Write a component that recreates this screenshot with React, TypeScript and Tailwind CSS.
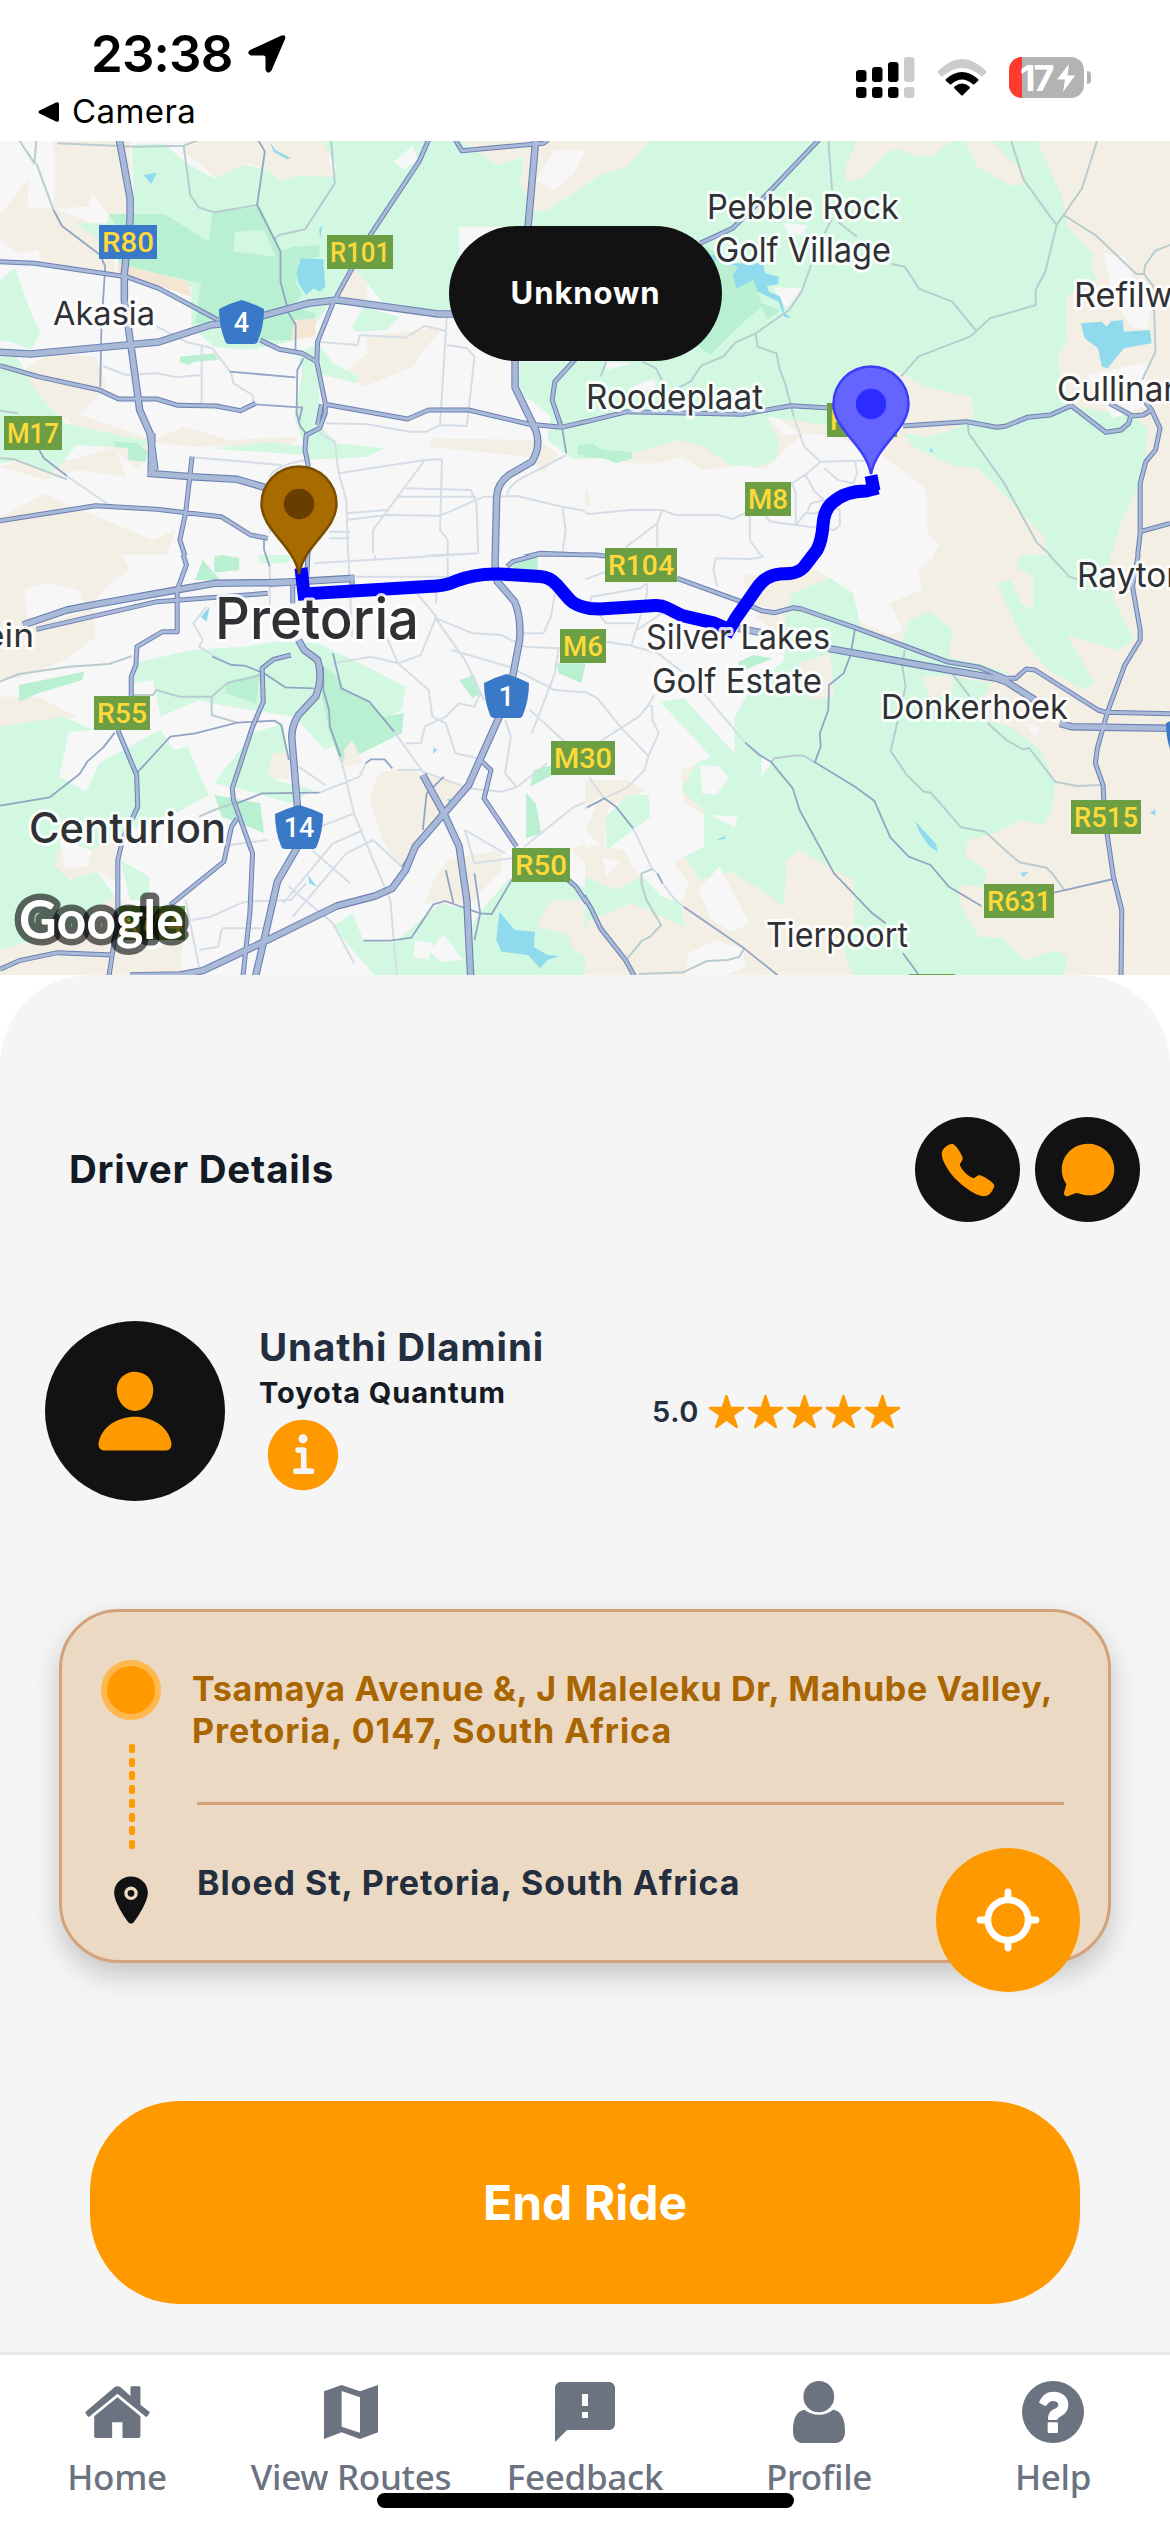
import React from "react";
import {
  IoCall,
  IoChatbubble,
  IoInformationCircle,
  IoLocation,
  IoPerson,
  IoStar,
} from "react-icons/io5";
import { MdFeedback } from "react-icons/md";

const CITY = "#f7f7f7";
const SAND = "#f4efe4";
const PARK = "#d2f8e1";
const FOREST = "#b9f0d2";
const WATER = "#90daee";

type Area = [fill: string, points: string];

interface Sheet {
  id: string;
  x: number;
  y: number;
  clip: [number, number, number, number];
  base: string;
  areas: Area[];
  minor: string;
  rural: string;
  local: string;
  primary: string;
  motorway: string;
}

/* The map is drawn as four sheets, each in its own finer grid. */
const sheets: Sheet[] = [
  {
    id: "nw",
    x: 0,
    y: 140,
    clip: [0, 140, 585, 415],
    base: CITY,
    areas: [
      [SAND, "140,0 340,0 345,180 340,250 280,220 240,160 230,200 140,205 145,100"],
      [SAND, "0,225 75,115 72,205 140,205 220,240 300,300 300,400 200,400 110,370 100,330 50,340 0,300"],
      [SAND, "480,0 850,0 870,112 780,105 735,125 700,90 650,70 565,115 520,70 480,40"],
      [SAND, "1200,0 1568,0 1568,110 1430,210 1395,215 1360,130 1370,50 1300,75"],
      [SAND, "50,700 130,640 250,650 280,740 200,830 120,850 60,760"],
      [SAND, "150,800 400,900 480,860 600,900 780,890 760,915 500,920 400,905 360,990 300,930 200,870"],
      [SAND, "0,1130 120,1060 150,1080 400,1200 460,1170 430,1260 0,1260"],
      [SAND, "1130,895 1400,900 1460,940 1420,1000 1380,950 1120,920"],
      [SAND, "960,590 1160,560 1100,640 1080,680 950,740 900,700 960,640"],
      [SAND, "0,980 60,960 190,960 300,920 330,1010 200,990 120,1020"],
      [PARK, "345,15 430,10 480,65 560,115 640,75 700,90 735,125 780,105 870,112 880,80 840,0 1200,0 1300,75 1370,50 1360,130 1395,215 1430,210 1568,110 1568,260 1200,260 1200,520 1000,490 960,430 920,385 870,480 820,560 800,590 740,610 650,630 560,620 500,560 500,440 340,400 300,350 260,300 195,250 280,250 285,220 350,220"],
      [FOREST, "285,222 430,222 545,305 555,215 680,200 735,330 770,320 835,315 835,350 780,360 775,430 790,465 760,500 825,520 820,545 760,600 690,600 640,560 570,550 510,550 525,430 410,400 310,370 300,250"],
      [PARK, "615,275 690,270 720,350 610,335"],
      ["#f4e6d3", "305,370 490,425 500,470 410,435 310,400"],
      ["#f4e6d3", "770,540 825,535 825,590 760,600"],
      [SAND, "900,400 930,390 960,430 960,500 880,480"],
      [CITY, "1450,30 1530,30 1500,100 1450,150 1400,120"],
      [CITY, "1080,15 1090,60 1055,90 1030,65"],
      [PARK, "0,420 40,385 75,500 105,580 80,630 40,610 0,600"],
      [PARK, "0,640 40,640 90,750 170,850 330,890 400,905 360,925 200,915 150,985 130,1000 60,960 0,970"],
      [FOREST, "300,905 360,910 385,935 380,965 335,960 335,925 300,920"],
      [PARK, "780,640 830,610 870,670 940,710 930,730 830,700 840,860 880,910 1005,925 960,950 800,960 790,900 770,830 790,700"],
      [PARK, "560,925 700,905 800,920 800,945 600,930"],
      [PARK, "1360,665 1568,665 1568,950 1500,960 1430,900 1440,830 1400,790 1350,760"],
      [FOREST, "1510,915 1568,910 1568,950 1510,945"],
      [FOREST, "470,650 560,640 570,660 510,665 490,675 470,665"],
      [PARK, "950,500 1045,530 1010,570 930,575 920,560"],
      [WATER, "785,355 845,358 850,440 835,455 820,445 800,465 780,430 775,400"],
      [WATER, "375,105 410,98 395,133"],
      [WATER, "705,5 720,30 760,55 750,58 715,35"],
      [WATER, "843,255 837,295 834,270"],
    ],
    motorway:
      "M312 0L340 175V240L325 400V480L345 640L365 810L392 880L405 990M395 1000L397 880M385 1000L500 1010 620 1018 700 1045M0 637L80 642L415 606L550 555L630 545L805 490L880 480L1145 522H1200M1400 0L1380 260M1346 660V742L1400 870Q1415 920 1390 965L1330 1005Q1300 1030 1298 1070L1294 1260",
    primary:
      "M0 365L90 370 330 410 415 445 570 540M680 600L730 628 790 640 828 665 850 790V820L835 865 800 885 797 930 805 975 805 1260M1120 0L1095 65 965 290 870 490 830 605 828 665M1190 0L1207 32 1420 10 1432 0M0 677L100 710 260 750 310 777 410 777 465 796 565 798 628 812 668 790M850 793L1065 837 1120 810 1225 810 1380 852 1467 862 1568 835M1467 862L1443 780 1450 725 1510 650M0 1142L250 1097 410 1108 578 1130 655 1185 700 1195M502 950L485 1120 470 1200 487 1260M840 793L830 855M1340 1260L1410 1240 1568 1247",
    local:
      "M675 0L692 35 672 195 733 335 733 425 755 520 773 555 772 640M793 655L777 690 775 820 785 860 800 880M140 210L162 258 262 345 275 380 265 560 262 740M600 695L772 712M668 793L790 803 780 850M100 925L115 955 175 1008M1470 870L1480 940M690 1200V1230L700 1260",
    rural:
      "M50 0L90 70 95 0M95 70L140 210M150 10L355 20 480 17 520 0M480 17L497 165 520 203 560 217 672 195M865 0L875 130 797 268 730 285 715 298M0 955L35 957 175 1018M0 812L48 820",
    minor:
      "M175 1008L285 1095M410 560L485 605 555 625 605 700 610 730 660 765 663 790M527 615V790M268 678L330 705 410 700 460 712 525 705M830 605L935 615 940 585 1060 593 1110 558 1165 573M1168 520L1150 855M1168 615L1220 625 1240 650 1220 858 1150 855 1115 875 1070 875 960 853 850 850M835 880L875 905 885 1000 905 1080 910 1260M885 1000L1110 960 1155 958 1150 1170 1170 1200 1170 1260M1110 960L975 1170V1240M1060 1045L1230 1050 1245 1090 1250 1240M1040 1070H1245M905 1120L1010 1110M905 1140L1010 1125 1150 1127 1265 1070 1350 1068 1470 1100 1568 1120M1470 1100L1478 1170 1470 1240M1325 1065Q1330 1030 1380 1005L1480 945M860 1175H915M860 1195H915M505 952L735 975M705 1180V1010Q720 975 800 960M890 1258L1250 1240",
  },
  {
    id: "ne",
    x: 570,
    y: 140,
    clip: [585, 140, 585, 415],
    base: PARK,
    areas: [
      [SAND, "0,0 210,0 150,80 80,105 0,165"],
      [CITY, "0,0 30,0 15,30 45,60 0,90"],
      [SAND, "745,0 745,15 720,80 720,120 740,125 770,110 830,35 860,28 910,50 950,48 1000,0"],
      [SAND, "1030,0 1100,0 1150,60 1190,90 1185,130 1155,138 1065,80"],
      [SAND, "1220,0 1568,0 1568,1260 1410,1260 1440,1150 1500,1000 1510,870 1480,830 1320,800 1285,740 1275,650 1300,600 1295,470 1380,420 1365,390 1365,340 1300,260 1285,170"],
      [CITY, "1395,340 1450,350 1475,420 1520,480 1510,570 1465,560 1420,470"],
      [CITY, "1350,705 1510,665 1500,800 1420,835 1400,800"],
      [SAND, "850,690 930,740 1050,770 1055,830 1000,870 930,890 870,880 900,925 1000,975 1065,985 1130,1060 1240,1190 1250,1260 0,1260 0,960 180,935 285,900 350,920 430,985 480,985 540,960 545,900 515,830 700,860"],
      [CITY, "0,960 100,955 160,970 230,970 290,950 345,990 450,975 510,990 560,930 610,880 700,890 820,950 930,1045 935,1180 965,1215 940,1260 0,1260"],
      [SAND, "0,1030 45,1050 55,1098 0,1090"],
      [CITY, "515,830 545,835 600,880 560,885"],
      [CITY, "90,665 165,670 95,690"],
      [CITY, "150,745 220,715 225,740 180,760"],
      [CITY, "530,442 608,445 565,505"],
      [CITY, "555,250 620,255 610,285 570,280"],
      [CITY, "0,870 30,865 0,905"],
      [FOREST, "340,310 440,380 480,420 500,490 550,510 515,540 500,500 460,540 365,645 320,600 370,540 380,440"],
      [FOREST, "20,915 60,910 85,930 160,935 165,955 120,970 90,955 15,950"],
      [WATER, "370,345 395,345 410,370 505,370 510,400 545,410 545,432 515,438 520,455 550,470 560,515 578,535 560,530 545,485 490,455 480,420 435,445 425,405 440,380 375,360"],
      [WATER, "1335,550 1390,545 1402,560 1415,543 1445,541 1447,575 1515,570 1520,610 1447,625 1405,685 1390,680 1380,625 1345,595"],
      [WATER, "938,932 945,923 950,938"],
    ],
    motorway: "",
    primary:
      "M650 0L500 180 425 265 340 310M0 857L150 815L450 823L578 797L690 805M870 858L1035 845 1115 862 1140 858 1195 832 1255 825 1310 797 1400 877 1440 870 1460 850 1465 828 1498 825 1520 810M1410 790L1470 828M1500 780L1520 810 1542 865 1530 930 1505 965 1490 1030V1180L1482 1260M1490 1175L1568 1150M0 1243L70 1245 100 1250M0 680L15 662",
    local: "",
    rural:
      "M675 0L685 150M685 235L665 280M635 360L605 455 573 510 485 580 433 607 400 650 343 677 315 725 280 745M700 245L750 290M840 372L875 380 913 447 998 484 1062 573L1045 590 910 650 865 710M1062 573L1098 535 1217 495 1217 450 1242 395 1272 255M1152 0L1185 118 1255 230 1272 255M1378 0L1338 145 1290 225 1272 255M1290 225L1375 287 1480 402 1500 402 1503 375 1530 332 1568 315M1500 402L1525 440 1530 635 1495 720M485 580L490 620 540 640 547 685 562 730 585 830M190 665L225 685 240 720M95 665L80 710M35 780L20 840M1040 850L1042 880 1135 1030 1220 1208 1270 1260",
    minor:
      "M585 830L612 920 655 965 620 1000 580 1030 590 1060V1155M655 965L745 962 750 1000 740 1030 700 1020 665 985M745 962H780M615 1005L640 1055 665 1080 630 1090 620 1115M590 1155L615 1120 645 1120 675 1090 705 1110V1155L690 1170 525 1145 510 1130M0 1107L50 1122 155 1110 240 1110 275 1125 385 1125 425 1137 455 1120 470 1130V1200L505 1255M240 1110L228 1150 145 1222M228 1150V1222",
  },
  {
    id: "sw",
    x: 0,
    y: 550,
    clip: [0, 555, 585, 420],
    base: CITY,
    areas: [
      [SAND, "0,0 260,0 320,20 340,60 290,95 240,160 250,260 170,330 60,380 0,390"],
      [CITY, "65,120 120,100 205,120 225,180 150,210 70,200"],
      [SAND, "0,440 100,440 200,500 0,540"],
      [PARK, "0,530 165,500 245,540 180,545 155,680 225,725 260,640 320,600 420,540 455,600 490,590 545,735 460,790 320,850 240,900 150,900 180,990 255,965 300,1040 250,1120 150,1150 0,1200"],
      [SAND, "150,900 240,900 300,860 310,1000 255,965 180,990 145,950"],
      [CITY, "155,870 240,900 230,950 170,955"],
      [PARK, "350,340 500,300 640,290 720,275 830,280 960,350 1060,410 1050,480 850,600 770,500 600,470 520,450 420,500 400,390 350,400"],
      [PARK, "560,700 660,550 740,520 750,600 720,690 820,720 760,760 640,720"],
      [SAND, "710,610 755,610 755,690 700,680"],
      [FOREST, "850,350 890,390 900,420 965,455 1000,500 1055,490 1050,550 890,640 860,540 840,430"],
      [FOREST, "590,395 680,370 670,460 590,430"],
      [FOREST, "560,20 580,15 625,25 625,60 560,68"],
      [FOREST, "530,30 575,90 510,90"],
      [FOREST, "50,405 220,365 215,390 100,430 50,455"],
      [FOREST, "1200,390 1240,375 1255,430 1235,445"],
      [FOREST, "1455,340 1530,340 1520,400 1460,370"],
      [FOREST, "1395,660 1460,640 1470,660 1385,710"],
      [FOREST, "1375,730 1400,760 1415,850 1375,865"],
      [FOREST, "1340,45 1405,20 1405,65 1340,70"],
      [PARK, "670,0 780,0 750,40 680,40"],
      [FOREST, "560,735 680,760 690,850 650,830 580,800"],
      [PARK, "315,930 390,980 390,1050 340,1050"],
      [SAND, "990,670 1060,650 1110,680 1150,680 1220,710 1100,850 1050,960 1000,870 965,745"],
      [SAND, "1170,930 1310,900 1310,960 1230,1060 1110,1060 1130,1000"],
      [SAND, "0,1200 150,1150 250,1120 240,1080 300,1040 330,1060 290,1200 400,1200 480,1160 470,1278 0,1278"],
      [SAND, "900,600 920,570 950,640 900,650"],
      [SAND, "1490,900 1568,860 1568,980"],
      [PARK, "1245,1100 1330,985 1490,990 1568,1040 1568,1278 1180,1278"],
      [PARK, "870,1130 920,1090 950,1170 1030,1180 1150,1060 1230,1080 1240,1278 980,1278"],
      [CITY, "1085,1170 1130,1180 1120,1230 1080,1220"],
      [CITY, "1160,1155 1210,1230 1150,1235 1120,1200"],
      [SAND, "1440,1050 1530,1050 1568,1090 1568,1240 1500,1200 1480,1150 1400,1130"],
      [WATER, "1305,1085 1345,1140 1398,1145 1395,1190 1430,1215 1462,1218 1430,1230 1412,1255 1380,1215 1310,1205 1297,1170"],
      [WATER, "805,975 828,1010 808,1000"],
      [WATER, "525,200 548,170 540,215"],
      [WATER, "1133,592 1143,600 1132,612"],
      [WATER, "1168,748 1178,745 1174,760"],
    ],
    motorway:
      "M60 225L175 180 250 163 460 120 560 100 700 98 770 95M705 100L925 85M780 270L795 300 830 330Q845 380 825 440L780 495Q760 530 763 570L778 780M778 890L725 995 690 1170 668 1278M1294 0V60L1300 95 1345 155Q1362 200 1358 270L1338 390M1305 500L1250 640 1225 705 1085 890 1060 960 1025 1015 980 1038 880 1068 685 1178 530 1262 470 1275 340 1278M1105 675L1160 790 1200 890 1220 1050 1230 1278",
    primary:
      "M95 238L410 155 700 130M475 0L487 45 463 120V245L425 245 358 290 355 345 343 380V440M308 540L357 675 360 770 320 870 308 930V1100L285 1278M0 1258L50 1232 150 1208 295 1215M760 315L715 328 685 355 688 455 660 530 607 715 610 750 660 910 653 1090 635 1278M620 805L605 830 585 935 445 1065M1255 630L1283 660 1265 745 1350 890M1485 990L1505 1010 1540 1070 1568 1130M805 0L800 130M1325 50L1340 35 1410 12 1568 15M765 105V160M920 75V110",
    local:
      "M0 767L130 742 208 672 228 635 270 592 300 548M357 670L445 560 510 550 620 518 718 512 735 525 755 630M555 320L605 345 640 347 690 370 745 412 820 415M845 350L845 420 860 480 862 530 890 620M870 310L892 415 965 455 1030 545M620 760L685 730 835 728M955 640L970 628 1005 628 1025 655M690 0L705 50M1160 680L1115 730 1105 840M1085 890L1050 950M1165 960L1185 1060M1240 970L1255 1090 1240 1170M1255 1090L1285 1092 1340 985M1255 1090L1163 1053 1133 1063 1075 1163 1020 1172 950 1172",
    rural: "M0 395L50 372 180 350 285 342 345 318M343 435L400 435 408 420 470 440 553 440V495L620 518M553 440L595 398 660 382 690 370M520 800L560 780 610 760",
    minor:
      "M530 270L520 290 600 345M540 170L505 220 530 270M705 50V170M835 728L940 680 955 640M890 620L925 790 975 930 1020 1050 1037 1278M1030 545L1105 665 1225 715 1310 725 1350 712 1430 640M780 650L850 705M1040 660H1100M815 900L915 1000M755 1010L870 1120 925 1240M740 1060L870 880 950 840M765 1100L905 910 975 870 1050 950M815 840L925 790M640 1055L760 1050 800 1000M500 1110L550 1100 640 1055M485 1050L520 1250M580 1135L700 1135M1010 260L1040 340 1120 420 1130 500 1165 520 1190 610 1250 625M870 340L970 320 1040 340 1100 315 1140 200 1090 130M1135 200L1215 330 1265 450M1140 205L1235 250 1310 255 1370 290 1460 295 1450 370 1390 550M1180 300L1330 350 1450 420 1568 430M1060 580L1100 580 1110 530 1165 500 1200 460 1240 470 1255 430M1385 480L1480 580M1320 510L1335 560 1320 670 1350 712M1215 840L1240 940 1370 920M1215 840L1320 910M1370 890L1500 770 1568 740M910 0L920 260M980 0V30M820 40L1255 10V-10M930 80H1250M1170 0V100M1140 105V160M1450 130L1440 200 1420 250 1360 250M600 885L700 870M520 1200L570 1190 580 1135",
  },
  {
    id: "se",
    x: 570,
    y: 550,
    clip: [585, 555, 585, 420],
    base: SAND,
    areas: [
      [CITY, "0,0 960,10 910,60 920,120 835,160 870,240 840,255 700,190 540,170 480,200 560,260 570,320 540,400 440,500 430,610 390,570 350,540 340,590 380,630 290,660 300,760 360,800 350,890 300,920 200,980 150,900 90,890 100,770 200,720 150,690 0,690"],
      [SAND, "450,75 560,80 640,60 690,90 600,130 560,190 480,160"],
      [PARK, "235,455 300,445 350,510 430,610 430,500 470,420 560,330 565,180 580,130 680,85 740,130 760,230 860,290 890,210 940,185 1000,240 990,320 1080,345 1150,370 1000,380 1100,400 1050,500 1150,530 1230,600 1268,700 1260,780 1235,825 1180,810 1110,850 1040,870 1030,920 1090,960 1080,1010 1015,1005 1020,1070 1070,1160 1130,1165 1190,1230 1270,1200 1300,1220 1290,1278 740,1278 715,1200 745,1100 740,990 690,960 600,900 565,930 560,1070 500,1020 420,965 340,990 300,920 350,890 350,780 290,720 330,640 370,620"],
      [PARK, "1115,100 1150,90 1180,160 1210,180 1210,80 1165,50 1180,10 1410,0 1420,150 1475,270 1430,300 1300,255 1370,400 1345,420 1250,360 1190,280"],
      [PARK, "95,800 150,735 205,735 210,800 95,900"],
      [PARK, "0,940 40,980 120,1020 220,960 290,1060 300,1130 160,1060 50,1110 20,1190 0,1150"],
      [SAND, "600,340 680,310 690,440 630,450"],
      [SAND, "920,380 1000,375 1000,430 940,445"],
      [CITY, "340,645 390,650 415,685 380,735 345,730"],
      [CITY, "335,1020 390,950 470,1120 420,1145 370,1110"],
      [CITY, "310,1210 380,1170 450,1195 460,1250 400,1278 300,1278"],
      [CITY, "500,620 530,630 500,685"],
      [CITY, "130,870 200,830 310,1000 290,1060 240,1040 160,945"],
      [CITY, "365,795 440,800 430,830"],
      [CITY, "0,800 80,740 40,840 78,885 0,905"],
      [CITY, "85,920 130,935 95,980"],
      [CITY, "1190,520 1230,530 1215,565"],
      [CITY, "580,440 540,430 560,400"],
      [FOREST, "440,335 480,315 530,325 445,365"],
      [FOREST, "0,340 40,340 25,405 0,380"],
      [WATER, "900,810 915,830 955,880 962,905 940,890 915,850"],
      [WATER, "378,872 405,858 405,866"],
      [WATER, "1178,968 1200,965 1183,981"],
      [WATER, "1515,788 1530,778 1530,797"],
    ],
    motorway: "M440 235L500 248M675 295L900 342 1115 385 1140 395 1215 450M1280 520L1310 530 1568 535",
    primary:
      "M0 13L70 15 110 20M280 85L440 152 500 182 535 188 585 173 605 177 745 233 985 335 1070 352 1140 385 1165 385 1192 357 1215 360 1380 480 1400 487 1568 491M1487 0L1470 110 1490 240V270L1450 345 1405 485 1378 595 1373 640 1393 705 1397 800 1420 980 1442 1080 1440 1278M0 990L20 1010 55 1075 80 1135 145 1230 168 1278",
    local:
      "M745 235L733 315 715 370 677 405 675 480 653 550 655 590 640 637 745 710 795 752 837 862 885 920 942 945 990 1010 1075 1068M1265 1028L1420 987M458 578L495 615 525 635 582 715 600 780 690 970 790 1090 825 1120M870 1210L910 1272M45 772L90 745 120 770 165 835M228 970L242 1000M297 1070L455 1195 545 1278",
    rural:
      "M525 635L535 625 590 616 612 618 640 637M875 300L868 345 877 410 838 603 880 675 925 725 943 728 1022 832 1085 845 1145 908 1175 937 1245 953 1260 970 1292 1020M1000 372L1045 440M1092 520L1140 570 1183 598 1200 594 1268 695 1325 708 1390 705M215 957L187 970 187 1000 200 1050 238 1125 210 1160 188 1172 150 1225M180 1272L295 1267 358 1233 412 1230 443 1220 455 1195M1240 0L1305 80 1330 90",
    minor:
      "M350 430L458 578M165 835L215 957 228 970M242 1000L275 1050 297 1070M0 795L45 772M80 573L180 500 205 465 215 470 215 510 232 550 205 618 195 660 150 712 90 745 60 700 50 680M205 465L220 435M0 423L35 423 70 443 135 535 205 618M95 275L160 287 230 310 350 415M160 287L200 140 202 100M0 105L95 65M55 140L185 115 200 100M55 140V165L95 220H170M385 110L375 60 380 25 470 27 505 20 490 0M175 240L240 190",
  },
];

type Plate = [text: string, x: number, y: number, w: number, blue?: boolean];
const plates: Plate[] = [
  ["R80", 99, 225, 58, true],
  ["R101", 327, 235, 66],
  ["M17", 4, 416, 58],
  ["M8", 745, 482, 46],
  ["R104", 605, 548, 72],
  ["R513", 827, 403, 70],
  ["R55", 94, 696, 56],
  ["M6", 560, 629, 46],
  ["M30", 551, 741, 64],
  ["R50", 512, 848, 58],
  ["R515", 1071, 800, 70],
  ["R631", 984, 884, 70],
  ["R114", 119, 906, 66],
  ["", 909, 974, 46],
];

type Shield = [text: string, cx: number, top: number, w: number];
const shields: Shield[] = [
  ["4", 241.5, 300, 45],
  ["1", 506.5, 674, 45],
  ["14", 299, 805, 48],
  ["4", 1190, 714, 48],
];

type Label = [text: string, x: number, baseline: number, width: number, size: number, weight: number];
const labels: Label[] = [
  ["Akasia", 53, 325, 102, 33, 400],
  ["Pebble Rock", 707, 219, 192, 34, 400],
  ["Golf Village", 715, 262, 176, 34, 400],
  ["Roodeplaat", 586, 409, 177, 34, 400],
  ["Refilwe", 1074, 307, 118, 34, 400],
  ["Cullinan", 1057, 401, 126, 34, 400],
  ["Pretoria", 215, 639, 204, 57, 500],
  ["Centurion", 29, 843, 197, 42, 500],
  ["ein", -16, 647, 50, 33, 400],
  ["Silver Lakes", 646, 649, 184, 34, 400],
  ["Golf Estate", 652, 693, 170, 34, 400],
  ["Rayton", 1077, 587, 109, 34, 400],
  ["Donkerhoek", 881, 719, 187, 34, 400],
  ["Tierpoort", 766, 947, 142, 34, 400],
];

function Road({ d, color, width }: { d: string; color: string; width: number }) {
  return (
    <path
      d={d}
      fill="none"
      stroke={color}
      strokeWidth={width}
      strokeLinejoin="round"
      vectorEffect="non-scaling-stroke"
    />
  );
}

function MapPin({ x, y, fill, edge, dot }: { x: number; y: number; fill: string; edge: string; dot: string }) {
  return (
    <g transform={`translate(${x} ${y})`}>
      <path
        d="M0 70C-5 41-37.500 26-37.500 0A37.500 37.500 0 1 1 37.500 0C37.500 26 5 41 0 70Z"
        fill={fill}
        stroke={edge}
        strokeWidth="2.500"
      />
      <circle r="15.200" fill={dot} />
    </g>
  );
}

function CityMap() {
  return (
    <svg className="block h-[834px] w-full" viewBox="0 141 1170 834">
      <defs>
        {sheets.map((s) => (
          <clipPath key={s.id} id={`sheet-${s.id}`}>
            <rect x={s.clip[0]} y={s.clip[1]} width={s.clip[2]} height={s.clip[3]} />
          </clipPath>
        ))}
      </defs>
      {sheets.map((s) => (
        <g key={s.id} clipPath={`url(#sheet-${s.id})`}>
          <g transform={`translate(${s.x} ${s.y}) scale(0.382653 0.333333)`}>
            <rect x="0" y="0" width="1568" height="1290" fill={s.base} />
            {s.areas.map(([fill, points], i) => (
              <polygon key={i} points={points} fill={fill} />
            ))}
            <Road d={s.minor} color="#d5dee6" width={2} />
            <Road d={s.rural} color="#b9ccd0" width={2} />
            <Road d={s.local} color="#92a5c4" width={1.8} />
            <Road d={s.primary} color="#6d80b3" width={5} />
            <Road d={s.motorway} color="#6d80b3" width={7.5} />
            <Road d={s.primary} color="#a9b9d8" width={3} />
            <Road d={s.motorway} color="#a9b9d8" width={5.3} />
          </g>
        </g>
      ))}

      {plates.map(([text, x, y, w, blue]) => (
        <g key={`${text}${x}`}>
          <rect x={x} y={y} width={w} height="34" fill={blue ? "#3a78c8" : "#6c9f44"} />
          {text && (
            <text
              x={x + 3}
              y={y + 27}
              textLength={w - 6}
              lengthAdjust="spacingAndGlyphs"
              fill="#fdd93a"
              fontSize="28"
              className="font-['Roboto',sans-serif] font-medium"
            >
              {text}
            </text>
          )}
        </g>
      ))}

      {shields.map(([text, cx, top, w]) => (
        <g key={`${text}${cx}`} transform={`translate(${cx} ${top})`}>
          <path
            d={`M0 0Q11 3 ${w / 2} 9Q${w / 2} 26 ${w / 2 - 6} 41Q${w / 2 - 7} 44 ${w / 2 - 10} 44H${-w / 2 + 10}Q${-w / 2 + 7} 44 ${-w / 2 + 6} 41Q${-w / 2} 26 ${-w / 2} 9Q-11 3 0 0Z`}
            fill="#3a78c8"
          />
          <text
            x="0"
            y="31.500"
            textAnchor="middle"
            fill="#fff"
            fontSize="27"
            className="font-['Roboto',sans-serif] font-medium"
          >
            {text}
          </text>
        </g>
      ))}

      <g fill="none" stroke="#0000ff" strokeWidth="13">
        <path d="M301 568L304 594L436 586Q448 585 456 581Q476 573 500 574L540 576.500Q550 577 557 585L570 600Q576 606 590 608.500L600 609L655 605.500Q661 605 667 608L682 615.500L714 623Q722 626 729 630L736 618L757 588Q766 575 780 574L790 573.500Q798 573 804 567L817 550Q822 540 823 525Q824 510 832 503Q845 491 866 491L878 488" />
        <path d="M874 491L871 475.500" />
      </g>

      {labels.map(([text, x, y, w, size, weight]) => (
        <text
          key={text}
          x={x}
          y={y}
          textLength={w}
          lengthAdjust="spacingAndGlyphs"
          fontSize={size}
          fontWeight={weight}
          fill="#303135"
          stroke="#ffffff"
          strokeOpacity="0.85"
          strokeWidth="6"
          strokeLinejoin="round"
          paintOrder="stroke"
          className="font-['Inter',sans-serif]"
        >
          {text}
        </text>
      ))}

      <MapPin x={299} y={504} fill="#a86b00" edge="#7a4d00" dot="#663f00" />
      <MapPin x={871} y={404} fill="#6464ff" edge="#3c3cff" dot="#2d2dff" />

      <text
        x="19"
        y="939"
        textLength="165"
        lengthAdjust="spacingAndGlyphs"
        fontSize="53"
        fill="#ffffff"
        stroke="#000000"
        strokeOpacity="0.6"
        strokeWidth="13"
        strokeLinejoin="round"
        paintOrder="stroke"
        className="font-['Lato',sans-serif] font-bold"
      >
        Google
      </text>
    </svg>
  );
}

function StatusBar() {
  return (
    <header className="flex h-[141px] justify-between bg-white">
      <div className="flex flex-col pt-[28px] text-black">
        <div className="flex h-[51px] items-start pl-[91px]">
          <span className="w-[157px] text-[51px] leading-none font-semibold tracking-[-0.8px]">23:38</span>
          <svg className="mt-[7px] h-[38px] w-[38px]" viewBox="0 0 38 38">
            <path
              d="M33.500.500Q38.500-1 37 4L23.500 35.500Q20 40 17.500 35V22.500Q17.500 20.500 15.500 20.500H3Q-2 18.500 2 15Z"
              fill="currentColor"
            />
          </svg>
        </div>
        <div className="mt-[16px] flex items-start pl-[38px]">
          <svg className="mt-[7px] h-[20px] w-[21px]" viewBox="0 0 21 20">
            <path d="M1.500 8.500Q-.500 10 1.500 11.500L18 19.500Q21 20.500 21 18V2Q21-.500 18 .500Z" fill="currentColor" />
          </svg>
          <span className="ml-[13px] text-[33px] leading-none tracking-[0.4px]">Camera</span>
        </div>
      </div>
      <div className="flex items-start pt-[57px] pr-[79px]">
        <svg className="h-[41px] w-[59px]" viewBox="0 0 59 41">
          <g fill="#000">
            <rect x="0" y="13" width="10.500" height="12" rx="3" />
            <rect x="16" y="10" width="10.500" height="15" rx="3" />
            <rect x="32" y="5" width="10.500" height="20" rx="3" />
            <rect x="0" y="30" width="10.500" height="11" rx="3" />
            <rect x="16" y="30" width="10.500" height="11" rx="3" />
            <rect x="32" y="30" width="10.500" height="11" rx="3" />
          </g>
          <g fill="#ccc">
            <rect x="48" y="0" width="10.500" height="25" rx="3" />
            <rect x="48" y="30" width="10.500" height="11" rx="3" />
          </g>
        </svg>
        <svg className="mt-[2px] ml-[22px] h-[37px] w-[50px]" viewBox="0 0 50 37">
          <path d="M1 12Q25-12 49 12Q50 13 49 14L46 17Q45 18 44 17Q25 1 6 17Q5 18 4 17L1 14Q0 13 1 12Z" fill="#ccc" />
          <path d="M9 20Q25 6 41 20Q42 21 41 22L37.500 25Q36.500 26 35.500 25Q25 16 14.500 25Q13.500 26 12.500 25L9 22Q8 21 9 20Z" fill="#000" />
          <path d="M17.500 27.500Q25 21.500 32.500 27.500Q33.500 28.500 32.500 29.500L26 36Q25 37 24 36L17.500 29.500Q16.500 28.500 17.500 27.500Z" fill="#000" />
        </svg>
        <div className="ml-[22px] flex items-center">
          <div className="relative flex h-[41px] w-[75px] items-center overflow-hidden rounded-[13px] bg-[#b3b3b3] text-white">
            <div className="absolute inset-y-0 left-0 w-[13px] bg-[#ff3b30]" />
            <span className="relative ml-[11px] w-[37px] text-[36px] leading-none font-bold tracking-[-2px]">17</span>
            <svg className="relative h-[28px] w-[18px]" viewBox="0 0 18 28">
              <path d="M12 0L0 15.500H8L6 28L18 11.500H10.500Z" fill="#fff" />
            </svg>
          </div>
          <div className="ml-[3px] h-[13px] w-[4px] rounded-r-full bg-[#b3b3b3]" />
        </div>
      </div>
    </header>
  );
}

function RoundAction({ children }: { children: React.ReactNode }) {
  return (
    <button className="flex size-[105px] items-center justify-center rounded-full bg-[#121212] text-[60px] text-[#ff9900]">
      {children}
    </button>
  );
}

function TripCard() {
  return (
    <section className="relative mx-[59px] mt-[108px] flex h-[354px] rounded-[60px] border-[3px] border-[#d4a27a] bg-[#ecd9c4] shadow-[0_12px_28px_rgba(0,0,0,0.2)]">
      <div className="ml-[39px] flex w-[60px] flex-col items-center pt-[48px]">
        <div className="size-[60px] rounded-full border-[6px] border-[#ffb84d] bg-[#ff9900]" />
        <div className="mt-[24px] ml-[1px] flex h-[105px] flex-col justify-between">
          {Array.from({ length: 8 }, (_, i) => (
            <div key={i} className="h-[9px] w-[6px] rounded-[2px] bg-[#ff9900]" />
          ))}
        </div>
        <IoLocation className="mt-[24px] size-[54px] text-[#121212]" />
      </div>
      <div className="ml-[31px] flex flex-col pt-[56px] text-[34px] leading-[42px] font-bold">
        <p className="whitespace-nowrap text-[#a86500]">
          <span className="tracking-[0.68px]">Tsamaya Avenue &amp;, J Maleleku Dr, Mahube Valley,</span>
          <br />
          <span className="tracking-[1px]">Pretoria, 0147, South Africa</span>
        </p>
        <div className="mt-[50px] ml-[5px] h-[3px] w-[867px] bg-[#d4a27a]" />
        <p className="mt-[57px] ml-[5px] tracking-[0.95px] text-[#232f3e]">Bloed St, Pretoria, South Africa</p>
      </div>
      <button className="absolute top-[236px] left-[874px] flex size-[144px] items-center justify-center rounded-full bg-[#ff9900]">
        <svg className="size-[64px]" viewBox="-32 -32 64 64" fill="none" stroke="#fff" strokeWidth="6.800" strokeLinecap="round">
          <circle r="20.200" />
          <path d="M0-28V-22M0 28V22M-28 0H-22M28 0H22" />
        </svg>
      </button>
    </section>
  );
}

const tabs = [
  {
    label: "Home",
    icon: (
      <svg className="h-[52px] w-[65px]" viewBox="222 138 170 156" preserveAspectRatio="none" fill="currentColor">
        <path d="M307 172L367 229V287Q367 294 360 294H320V247H293V294H253Q246 294 246 287V229Z" />
        <path d="M299 142Q307 135 315 142L341 168V142Q341 139 344 139H364Q367 139 367 142V194L391 216L391 219L384 230H381L307 161L233 230H230L223 219V216Z" />
      </svg>
    ),
  },
  {
    label: "View Routes",
    icon: (
      <svg className="h-[54px] w-[54px]" viewBox="847 135 141 162" preserveAspectRatio="none" fill="currentColor">
        <path fillRule="evenodd" d="M847 154L893 135L941 154L988 135V277L941 297L893 277L847 297ZM893 153V260L941 278V172Z" />
      </svg>
    ),
  },
  { label: "Feedback", icon: <MdFeedback className="size-[72px]" /> },
  {
    label: "Profile",
    icon: (
      <svg className="h-[62px] w-[52px]" viewBox="583 123 135 186" preserveAspectRatio="none" fill="currentColor">
        <ellipse cx="650" cy="170" rx="40" ry="47" />
        <path d="M583 272C583 236 592 212 613 209Q629 224 650 224Q671 224 687 209C708 212 718 236 718 272Q718 309 690 309H610Q583 309 583 272Z" />
      </svg>
    ),
  },
  {
    label: "Help",
    icon: (
      <svg className="size-[62px]" viewBox="1181 123 162 186" preserveAspectRatio="none" fill="currentColor">
        <path
          fillRule="evenodd"
          d="M1262 123A81 93 0 1 0 1262 309A81 93 0 1 0 1262 123ZM1226 186C1234 164 1247 155 1264 155C1287 155 1302 172 1302 193C1302 212 1294 221 1283 229C1277 233 1274 236 1274 238Q1274 240 1271 240H1252Q1249 240 1249 237C1249 223 1254 213 1265 207C1272 203 1276 200 1276 194C1276 187 1270 183 1262 183C1254 183 1251 188 1245 196Q1243 199 1240 197L1227 189Q1225 188 1226 186ZM1251 247H1272Q1275 247 1275 250V276Q1275 279 1272 279H1251Q1248 279 1248 276V250Q1248 247 1251 247Z"
        />
      </svg>
    ),
  },
];

function TabBar() {
  return (
    <nav className="relative grid h-[180px] grid-cols-5 border-t-[3px] border-[#e5e7eb] bg-white text-[#6b7280]">
      {tabs.map((tab) => (
        <a key={tab.label} className="flex flex-col items-center pt-[21px]">
          <span className="flex h-[72px] items-center">{tab.icon}</span>
          <span className="mt-[11px] font-['Noto_Sans',sans-serif] text-[35px] leading-[36px] font-medium tracking-[-0.3px] whitespace-nowrap">
            {tab.label}
          </span>
        </a>
      ))}
      <div className="absolute bottom-[24px] left-[377px] h-[15px] w-[417px] rounded-full bg-black" />
    </nav>
  );
}

export default function App() {
  return (
    <main className="flex h-[2532px] w-[1170px] flex-col overflow-hidden bg-white font-['Inter',sans-serif]">
      <StatusBar />
      <div className="relative">
        <CityMap />
        <div className="absolute top-[85px] left-[449px] flex h-[135px] w-[273px] items-center justify-center rounded-full bg-[#121212] text-[31px] font-bold tracking-[0.9px] text-white">
          Unknown
        </div>
      </div>
      <div className="flex flex-1 flex-col rounded-t-[90px] bg-[#f5f5f5] pt-[142px]">
        <div className="flex items-center justify-between pr-[30px] pl-[69px]">
          <h1 className="text-[38.500px] leading-none font-bold tracking-[0.78px] text-[#141b24]">Driver Details</h1>
          <div className="flex gap-[15px]">
            <RoundAction>
              <IoCall />
            </RoundAction>
            <RoundAction>
              <IoChatbubble />
            </RoundAction>
          </div>
        </div>
        <div className="mt-[99px] flex h-[180px] items-start pl-[45px]">
          <div className="flex size-[180px] items-center justify-center rounded-full bg-[#121212]">
            <IoPerson className="size-[90px] text-[#ff9900]" />
          </div>
          <div className="ml-[34px] flex w-[393px] flex-col pt-[7px]">
            <h2 className="text-[38.500px] leading-[38px] font-bold tracking-[0.88px] text-[#232f3e]">Unathi Dlamini</h2>
            <p className="mt-[12px] text-[29px] leading-[29px] font-bold tracking-[0.9px] text-[#141b24]">Toyota Quantum</p>
            <IoInformationCircle className="mt-[3px] -ml-px size-[90px] text-[#ff9900]" />
          </div>
          <div className="flex h-full items-center">
            <span className="w-[55px] text-[29px] leading-none font-semibold tracking-[0.6px] text-[#232f3e]">5.0</span>
            {Array.from({ length: 5 }, (_, i) => (
              <IoStar key={i} className="size-[39px] p-[0.500px] text-[#ff9900]" />
            ))}
          </div>
        </div>
        <TripCard />
        <button className="mx-[90px] mt-[138px] flex h-[203px] items-center justify-center rounded-[90px] bg-[#ff9900] text-[48px] leading-none font-bold text-white">
          End Ride
        </button>
      </div>
      <TabBar />
    </main>
  );
}
